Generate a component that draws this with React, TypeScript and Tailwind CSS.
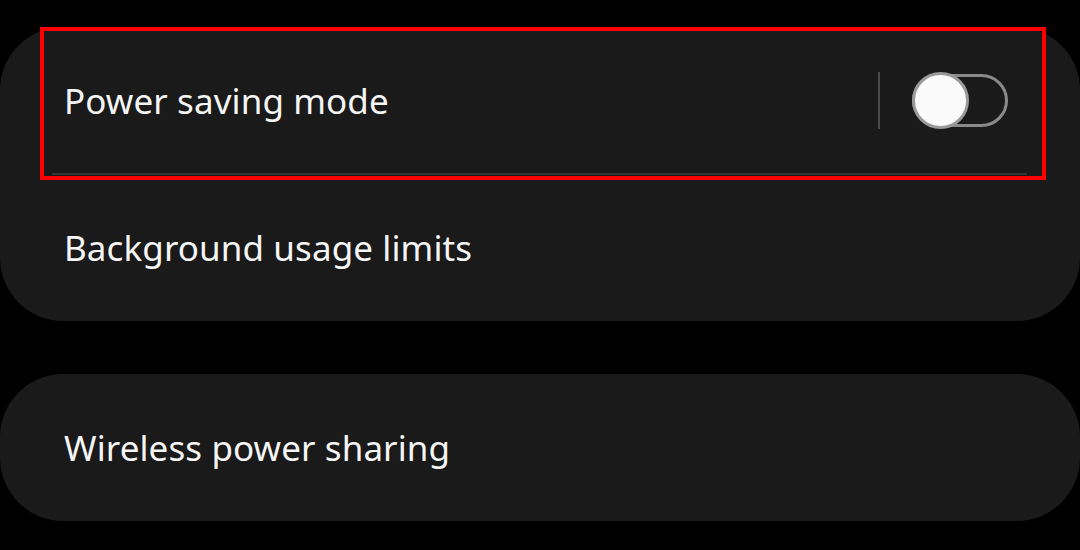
import React from "react";

export default function App() {
  const font = { fontFamily: '"Noto Sans", "Open Sans", sans-serif' };
  return (
    <div className="relative w-[1080px] h-[550px] bg-black overflow-hidden" style={font}>
      <div className="flex flex-col pt-[27px] gap-[53px]">
        <div className="bg-[#1a1a1a] rounded-[63px] flex flex-col">
          <div className="relative h-[147px] flex items-center pl-[64px] pr-[72px]">
            <span className="text-[35px] text-[#f5f5f5] tracking-[0.1px] flex-1 pt-[2px]">Power saving mode</span>
            <div className="w-[2px] h-[57px] bg-[#4a4a4a] mr-[32px]" />
            <div className="relative w-[96px] h-[57px] flex items-center">
              <div className="w-[96px] h-[53px] rounded-full border-[3px] border-[#8a8a8a]" />
              <div className="absolute left-0 top-0 w-[57px] h-[57px] rounded-full bg-[#fafafa] border-[3px] border-[#9a9a9a]" />
            </div>
            <div className="absolute left-[52px] right-[53px] bottom-[-1px] h-[2px] bg-[#343434]" />
          </div>
          <div className="h-[147px] flex items-center pl-[64px]">
            <span className="text-[35px] text-[#f5f5f5] tracking-[0.1px] pt-[2px]">Background usage limits</span>
          </div>
        </div>
        <div className="bg-[#1a1a1a] rounded-[63px] h-[147px] flex items-center pl-[64px]">
          <span className="text-[35px] text-[#f5f5f5] tracking-[0.1px] pt-[2px]">Wireless power sharing</span>
        </div>
      </div>
      <div className="absolute left-[40px] top-[27px] w-[1006px] h-[153px] border-4 border-[#ff0000]" />
    </div>
  );
}
